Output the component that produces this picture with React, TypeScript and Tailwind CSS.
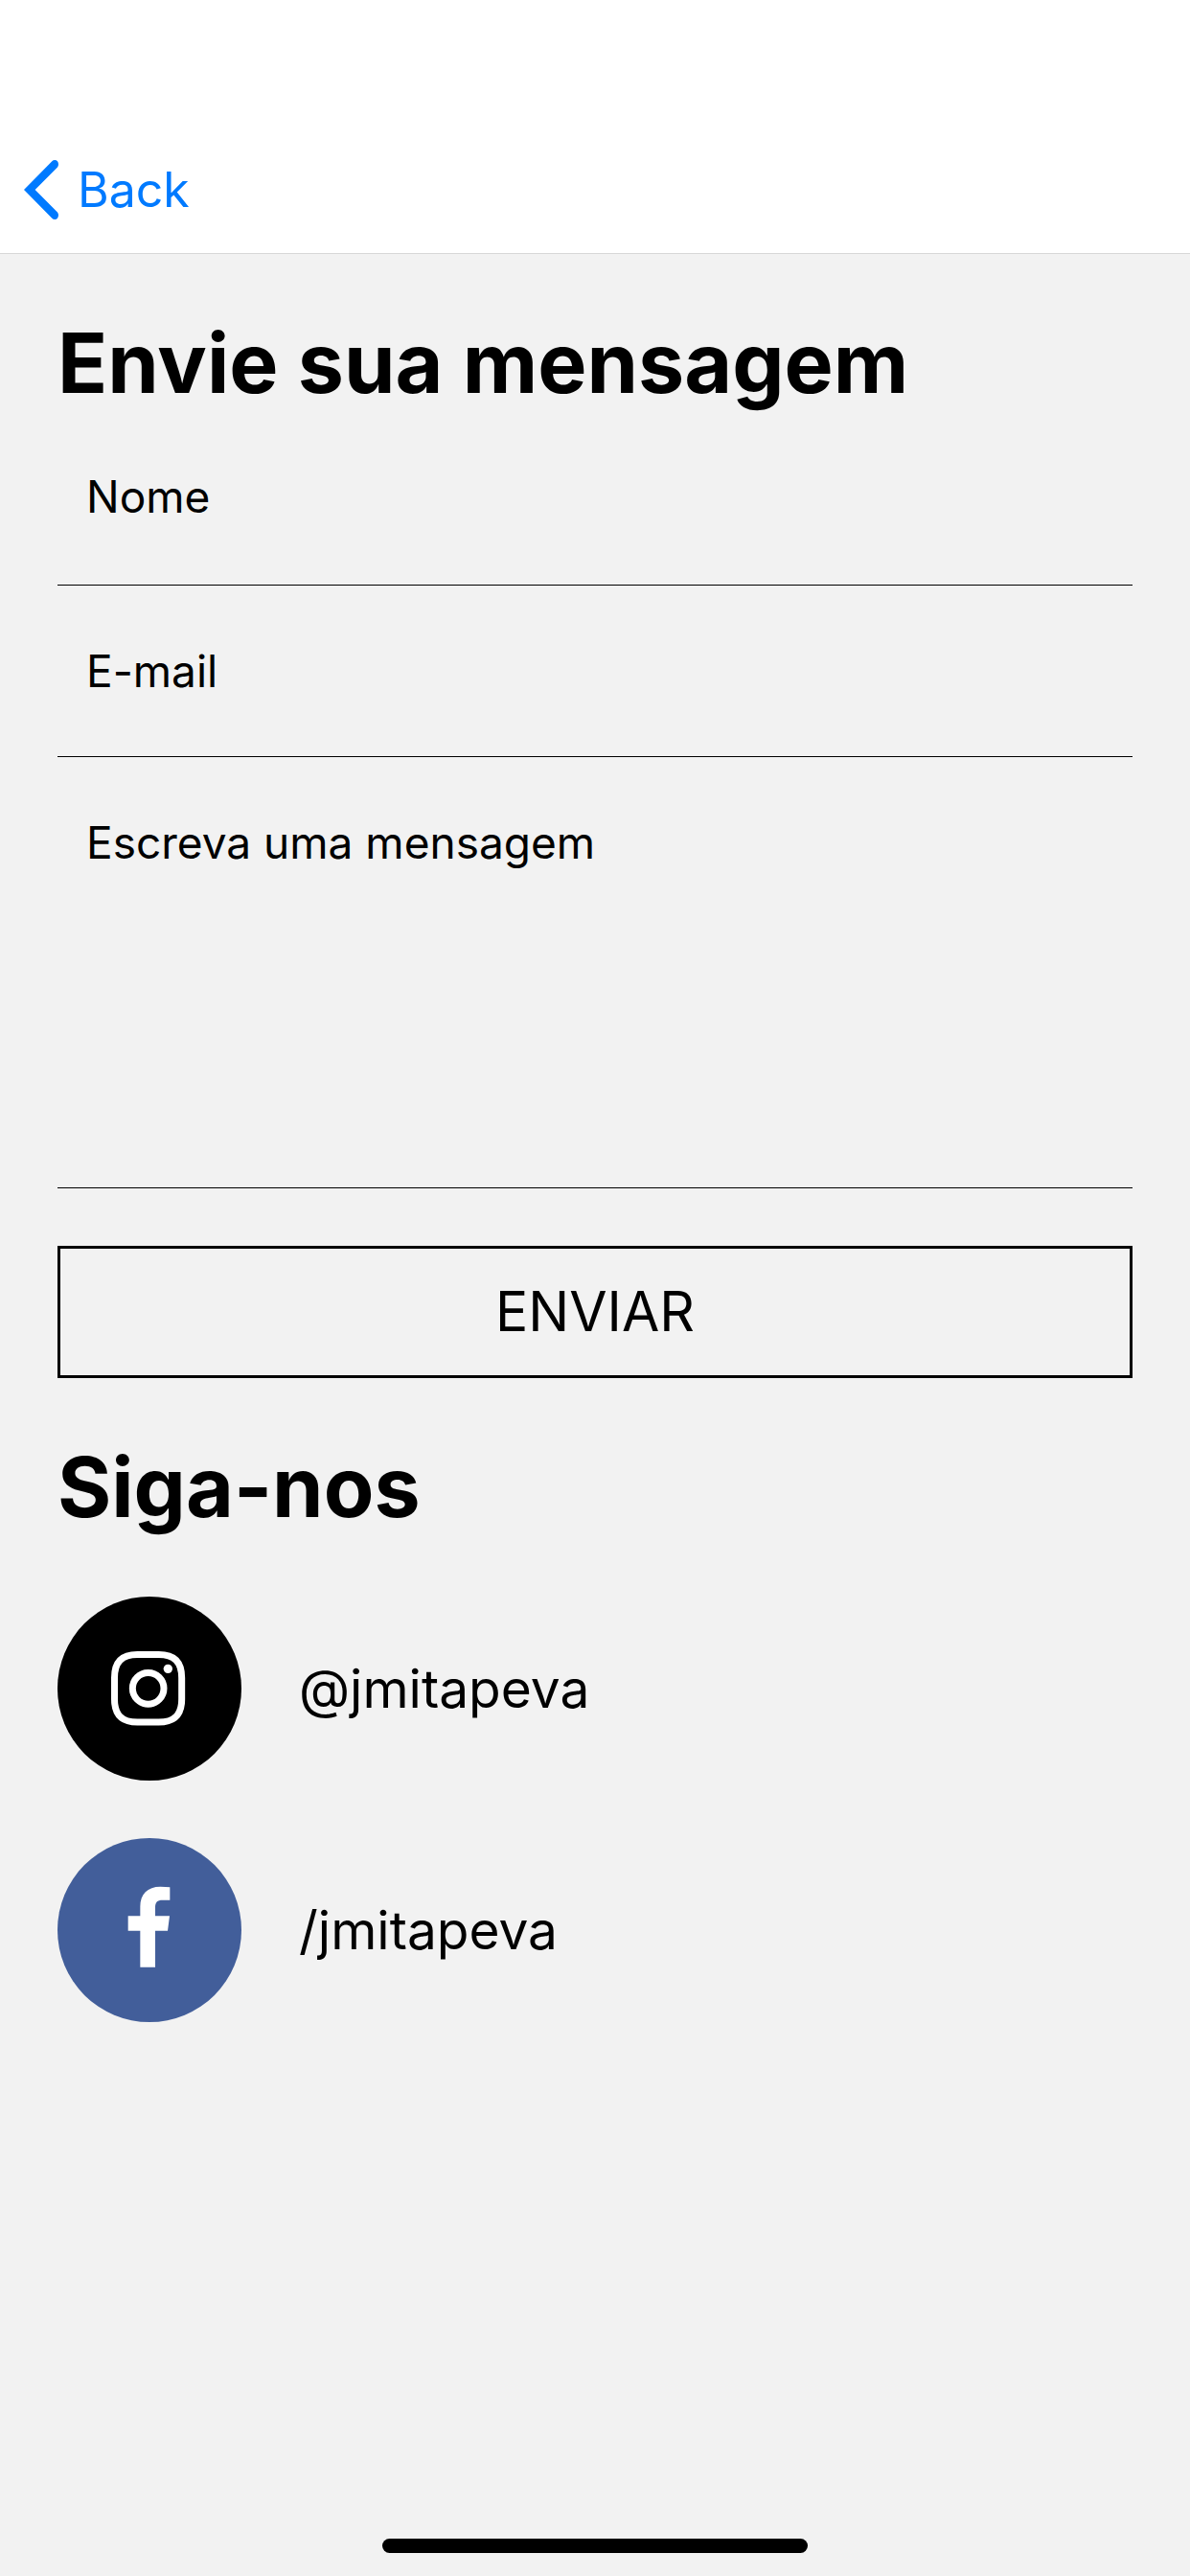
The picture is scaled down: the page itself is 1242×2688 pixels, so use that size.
import { FormEvent, ReactNode } from "react";

const BackIcon = () => (
  <svg viewBox="0 0 36 62" className="h-[62px] w-9" aria-hidden="true">
    <path
      d="M29.3 1.3A4 4 0 0 1 35 1.3Q37 4.5 35 7.4L11.6 31L35 54.6Q37 57.5 35 60.7A4 4 0 0 1 29.3 60.7L0 31Z"
      fill="#007aff"
    />
  </svg>
);

const InstagramIcon = () => (
  <svg viewBox="0 0 576 576" className="size-48" aria-hidden="true">
    <g fill="none" stroke="#fff" strokeWidth="21">
      <path d="M250 181.5H317C366 181.5 389 205 389 254V321C389 370 366 393 317 393H250C201 393 178.5 370 178.5 321V254C178.5 205 201 181.5 250 181.5Z" />
      <circle cx="284" cy="287.5" r="49" />
    </g>
    <circle cx="346" cy="226" r="14" fill="#fff" />
  </svg>
);

const FacebookIcon = () => (
  <svg viewBox="0 0 576 576" className="size-48" aria-hidden="true">
    <path
      d="M259 404V290H221V244H259V214C259 176 282 152 322 152Q339 152 352 154V194H329C312 194 306 201 306 217V244H351L345 290H306V404Z"
      fill="#fff"
    />
  </svg>
);

type SocialLinkProps = {
  href: string;
  label: string;
  icon: ReactNode;
  color: string;
};

const SocialLink = ({ href, label, icon, color }: SocialLinkProps) => (
  <a href={href} className="flex items-center gap-15">
    <span className={`size-48 rounded-full ${color}`}>{icon}</span>
    <span className="text-[55px] leading-[66px]">{label}</span>
  </a>
);

const fieldClass =
  "block w-full resize-none rounded-none border-b border-black bg-transparent px-[30px] text-[46px] leading-[58px] outline-none placeholder:text-black placeholder:opacity-100";

const App = () => {
  const handleSubmit = (event: FormEvent) => {
    event.preventDefault();
  };

  return (
    <div className="flex min-h-screen flex-col bg-[#f2f2f2] font-[Inter,sans-serif] text-black">
      <header className="border-b border-[#d8d8d8] bg-white pt-[132px]">
        <a
          href="#voltar"
          className="flex h-[132px] w-fit items-center gap-5 pl-[25px] text-[50px] leading-[60px] text-[#007aff]"
        >
          <BackIcon />
          Back
        </a>
      </header>

      <main className="flex-1 px-[60px]">
        <form onSubmit={handleSubmit} className="pt-16">
          <h1 className="text-[86px] leading-[100px] font-bold">
            Envie sua mensagem
          </h1>
          <input
            type="text"
            aria-label="Nome"
            placeholder="Nome"
            className={`h-[182px] pb-1 ${fieldClass}`}
          />
          <input
            type="email"
            aria-label="E-mail"
            placeholder="E-mail"
            className={`h-[179px] ${fieldClass}`}
          />
          <textarea
            aria-label="Escreva uma mensagem"
            placeholder="Escreva uma mensagem"
            className={`h-[450px] pt-15 ${fieldClass}`}
          />
          <button
            type="submit"
            className="mt-15 h-[138px] w-full border-3 border-black text-[57px] leading-[72px]"
          >
            ENVIAR
          </button>
        </form>

        <section className="pt-16">
          <h2 className="text-[86px] leading-[100px] font-bold">Siga-nos</h2>
          <div className="mt-16 flex flex-col items-start gap-15">
            <SocialLink
              href="#instagram"
              label="@jmitapeva"
              icon={<InstagramIcon />}
              color="bg-black"
            />
            <SocialLink
              href="#facebook"
              label="/jmitapeva"
              icon={<FacebookIcon />}
              color="bg-[#425e9a]"
            />
          </div>
        </section>
      </main>

      <div className="mx-auto mb-6 h-[15px] w-[444px] rounded-full bg-black" />
    </div>
  );
};

export default App;
